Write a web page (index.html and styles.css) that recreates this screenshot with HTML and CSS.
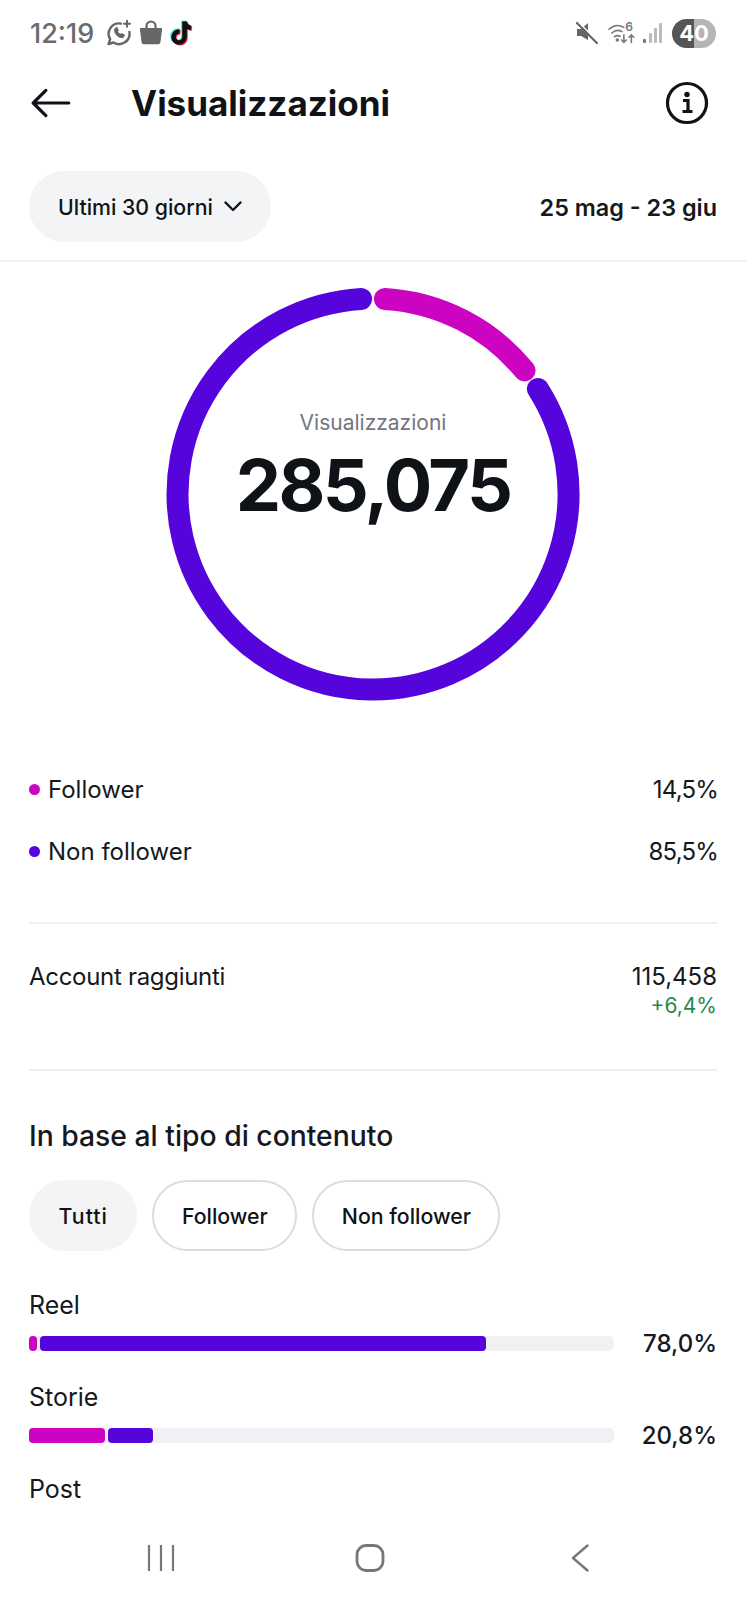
FILE: index.html
```html
<!DOCTYPE html>
<html lang="it">
<head>
    <meta charset="UTF-8">
    <meta name="viewport" content="width=device-width, initial-scale=1.0">
    <title>Visualizzazioni</title>
    <link rel="stylesheet" href="styles.css">
</head>
<body>

<div class="status-bar">
    <div class="status-left">
        <span class="clock">12:19</span>
        <svg class="ic-wa" width="28" height="28" viewBox="0 0 28 28" fill="none" stroke="#666" stroke-width="2.4" stroke-linecap="round" stroke-linejoin="round">
            <path d="M16 4.6A10.4 10.4 0 0 0 5.2 20.2L3.6 25l5-1.5A10.4 10.4 0 0 0 24.4 13"/>
            <path d="M9.6 10.4c0 4.4 3.6 8 8 8.2l1.8-2.4-3-1.6-1.2 1c-1.3-.7-2.4-1.8-3-3l1-1.2-1.4-3z" fill="#666" stroke-width="1.2"/>
            <path d="M22 1.8v6M19 4.8h6" stroke-width="2"/>
        </svg>
        <svg class="ic-bag" width="24" height="26" viewBox="0 0 24 26">
            <path d="M2 8h20c.8 0 1.2.5 1.1 1.3l-1.6 12.4c-.2 1.6-1.3 2.6-3 2.6H5.5c-1.7 0-2.8-1-3-2.6L.9 9.3C.8 8.5 1.2 8 2 8z" fill="#666"/>
            <path d="M7.5 8V6a4.500 4.500 0 0 1 9 0v2" fill="none" stroke="#666" stroke-width="2.2"/>
        </svg>
        <svg class="ic-tt" width="26" height="30" viewBox="0 0 26 28" fill="none" stroke-width="4.6">
            <path d="M9.5 12.5a5.500 5.500 0 1 0 5 5.500V2.500c.5 3.600 3 6 6.500 6.400" stroke="#25f4ee" transform="translate(-1 -.8)"/>
            <path d="M9.5 12.5a5.500 5.500 0 1 0 5 5.500V2.500c.5 3.600 3 6 6.500 6.400" stroke="#fe2c55" transform="translate(1 .8)"/>
            <path d="M9.5 12.5a5.500 5.500 0 1 0 5 5.500V2.500c.5 3.600 3 6 6.500 6.400" stroke="#111"/>
        </svg>
    </div>
    <div class="status-right">
        <svg width="24" height="24" viewBox="0 0 24 24">
            <path d="M2 8h4l7-6v17L6 15H2z" fill="#666"/>
            <path d="M2 2l20 20" stroke="#666" stroke-width="2.4" stroke-linecap="round"/>
            <path d="M4 1.500l20 20" stroke="#fff" stroke-width="1.2"/>
        </svg>
        <svg class="ic-wifi" width="28" height="26" viewBox="0 0 30 26" fill="none" stroke="#777" stroke-width="1.7" stroke-linecap="round">
            <path d="M1 9c5-4.500 11-5 16-2"/>
            <path d="M4 13c3.500-3 8-3.300 11-1.500"/>
            <path d="M7 17c2-1.500 4-1.500 6-.5"/>
            <circle cx="10" cy="20.500" r="1" fill="#777"/>
            <path d="M17 15v8m-2.500-2.500L17 23l2.500-2.500M25 23v-8m-2.500 2.500L25 15l2.500 2.500"/>
            <text class="wifi-six" x="18.500" y="11" fill="#777" stroke="none">6</text>
        </svg>
        <svg width="20" height="22" viewBox="0 0 20 22" fill="#bbb">
            <rect x="0" y="17" width="3" height="4" rx="1" fill="#777"/>
            <rect x="6" y="11" width="3" height="10" rx="1"/>
            <rect x="11" y="6" width="3" height="15" rx="1"/>
            <rect x="16" y="1" width="3" height="20" rx="1"/>
        </svg>
        <div class="battery"><span>40</span></div>
    </div>
</div>

<header class="top-bar">
    <svg class="back" width="40" height="30" viewBox="0 0 42 32" fill="none" stroke="#0f1216" stroke-width="3.4" stroke-linecap="round" stroke-linejoin="round">
        <path d="M40 16H3M15.500 2.500L2 16l13.500 13.500"/>
    </svg>
    <h1>Visualizzazioni</h1>
    <svg class="info" width="44" height="44" viewBox="0 0 44 44" fill="none">
        <circle cx="22" cy="22" r="19.500" stroke="#0f1216" stroke-width="3.2"/>
        <circle cx="22" cy="13.500" r="2.700" fill="#0f1216"/>
        <path d="M18 19.500h5v10.500M17.500 30.500h10" stroke="#0f1216" stroke-width="3.2"/>
    </svg>
</header>

<div class="filter-row">
    <div class="pill pill-on">Ultimi 30 giorni
        <svg width="18" height="11" viewBox="0 0 18 11" fill="none" stroke="#0f1216" stroke-width="2.4" stroke-linecap="round" stroke-linejoin="round"><path d="M1.500 1.500L9 9l7.500-7.500"/></svg>
    </div>
    <div class="dates">25 mag - 23 giu</div>
</div>

<section class="ring-wrap">
    <div class="ring">
        <svg width="414" height="414" viewBox="0 0 414 414" fill="none" stroke-width="22" stroke-linecap="round">
            <path d="M371.900 101.960A195.500 195.500 0 1 1 195.100 11.900" stroke="#5505dc"/>
            <path d="M218.900 11.900A195.500 195.500 0 0 1 358.500 83.400" stroke="#cc04c2"/>
        </svg>
        <div class="ring-text">
            <div class="ring-label">Visualizzazioni</div>
            <div class="ring-value">285,075</div>
        </div>
    </div>
</section>

<section class="legend">
    <div class="row"><span class="dot dot-pink"></span><span class="grow">Follower</span><span class="num">14,5%</span></div>
    <div class="row"><span class="dot dot-violet"></span><span class="grow">Non follower</span><span class="num">85,5%</span></div>
</section>

<section class="reach">
    <span class="reach-name">Account raggiunti</span>
    <div class="reach-nums">
        <div>115,458</div>
        <div class="up">+6,4%</div>
    </div>
</section>

<section class="by-type">
    <h2>In base al tipo di contenuto</h2>
    <div class="tabs">
        <div class="pill pill-on tab-all">Tutti</div>
        <div class="pill">Follower</div>
        <div class="pill">Non follower</div>
    </div>

    <div class="metric">
        <div class="metric-name">Reel</div>
        <div class="metric-line">
            <div class="track">
                <div class="seg seg-pink" style="width: 1.4%"></div>
                <div class="seg seg-violet" style="width: 76.2%"></div>
            </div>
            <div class="pct">78,0%</div>
        </div>
    </div>
    <div class="metric">
        <div class="metric-name">Storie</div>
        <div class="metric-line">
            <div class="track">
                <div class="seg seg-pink" style="width: 13%"></div>
                <div class="seg seg-violet" style="width: 7.7%"></div>
            </div>
            <div class="pct">20,8%</div>
        </div>
    </div>
    <div class="metric">
        <div class="metric-name">Post</div>
    </div>
</section>

<nav class="nav-bar">
    <svg width="28" height="28" viewBox="0 0 28 28" stroke="#777" stroke-width="2.2"><path d="M2 1v26M14 1v26M26 1v26"/></svg>
    <svg class="nav-home" width="30" height="28" viewBox="0 0 30 28" fill="none" stroke="#777" stroke-width="2.8"><rect x="2" y="1.500" width="26" height="25" rx="9"/></svg>
    <svg width="20" height="28" viewBox="0 0 20 28" fill="none" stroke="#777" stroke-width="2.4" stroke-linecap="round" stroke-linejoin="round"><path d="M17.500 1.500L3 14l14.500 12.500"/></svg>
</nav>

</body>
</html>
```

FILE: styles.css
```css
* {
    box-sizing: border-box;
}

html, body {
    margin: 0;
    padding: 0;
}

body {
    position: relative;
    width: 746px;
    height: 1600px;
    overflow: hidden;
    background-color: #fff;
    color: #15181d;
    font-family: Inter, "Liberation Sans", sans-serif;
    font-size: 24px;
}

h1, h2 {
    margin: 0;
}

svg {
    display: block;
    flex: none;
}

/* status bar */
.status-bar {
    height: 66px;
    padding: 0 30px;
    display: flex;
    align-items: center;
    justify-content: space-between;
}

.status-left, .status-right {
    display: flex;
    align-items: center;
}

.clock {
    font-size: 27px;
    font-weight: 500;
    color: #6b6b6b;
    margin-right: 11px;
}

.ic-bag {
    margin: 0 7px 0 6px;
}

.status-right svg {
    margin-right: 9px;
}

.status-right .ic-wifi {
    margin-right: 7px;
}

.wifi-six {
    font-size: 13px;
    font-family: Inter, sans-serif;
    font-weight: 600;
}

.battery {
    width: 44px;
    height: 29px;
    border-radius: 15px;
    background: linear-gradient(90deg, #555 0, #555 50%, #b5b5b5 50%, #b5b5b5 100%);
    color: #fff;
    font-size: 22px;
    font-weight: 700;
    text-align: center;
    line-height: 29px;
}

/* header */
.top-bar {
    height: 74px;
    padding: 0 30px;
    display: flex;
    align-items: center;
}

.back {
    margin-left: 1px;
}

.top-bar h1 {
    margin-left: 60px;
    font-size: 35px;
    font-weight: 650;
    color: #0f1216;
    flex: 1;
}

.info {
    margin-right: 7px;
}

/* filter */
.filter-row {
    margin-top: 32px;
    height: 90px;
    padding: 0 29px 19px;
    display: flex;
    align-items: center;
    justify-content: space-between;
    border-bottom: 2px solid #efefef;
}

.pill {
    height: 71px;
    padding: 0 27px;
    display: flex;
    align-items: center;
    gap: 11px;
    border: 2px solid #dcdcdc;
    border-radius: 36px;
    font-size: 21.3px;
    font-weight: 500;
    color: #0f1216;
}

.pill-on {
    background-color: #f3f4f6;
    border-color: #f3f4f6;
}

.tab-all {
    letter-spacing: 1px;
}

.dates {
    font-size: 23.4px;
    font-weight: 600;
    padding-top: 2px;
}

/* ring */
.ring-wrap {
    padding-top: 25px;
    display: flex;
    justify-content: center;
}

.ring {
    display: grid;
    width: 414px;
    height: 414px;
}

.ring > * {
    grid-area: 1 / 1;
}

.ring-text {
    padding-top: 122px;
    text-align: center;
}

.ring-label {
    font-size: 21px;
    line-height: 28px;
    color: #737680;
}

.ring-value {
    margin-top: 4px;
    font-size: 72px;
    letter-spacing: -2.6px;
    line-height: 88px;
    font-weight: 650;
    color: #0f1216;
}

/* legend */
.legend {
    margin: 0 29px;
    padding: 57px 0 40px;
    border-bottom: 2px solid #efefef;
}

.row {
    height: 62px;
    display: flex;
    align-items: center;
}

.dot {
    width: 11px;
    height: 11px;
    border-radius: 50%;
    margin-right: 8px;
}

.dot-pink {
    background-color: #cc04c2;
}

.dot-violet {
    background-color: #5505dc;
}

.grow {
    flex: 1;
}

.num {
    letter-spacing: -.8px;
    margin-right: -1px;
}

/* reach */
.reach {
    margin: 0 29px;
    padding: 38px 0 51px;
    display: flex;
    justify-content: space-between;
    border-bottom: 2px solid #efefef;
}

.reach-name {
    letter-spacing: -.3px;
}

.reach-nums {
    text-align: right;
}

.up {
    margin-top: 2px;
    font-size: 21px;
    color: #1f8a4d;
}

/* by type */
.by-type {
    padding: 47px 29px 0;
}

.by-type h2 {
    font-size: 28.3px;
    font-weight: 500;
    line-height: 36px;
}

.tabs {
    margin-top: 26px;
    display: flex;
    gap: 15px;
}

.tabs .pill {
    padding: 0 27.5px;
}

.metric {
    margin-top: 39px;
}

.metric + .metric {
    margin-top: 24px;
}

.metric-name {
    font-size: 25px;
    line-height: 30px;
}

.metric-line {
    margin-top: 9px;
    display: flex;
    align-items: center;
    justify-content: space-between;
}

.track {
    width: 585px;
    height: 15px;
    border-radius: 5px;
    background-color: #f0f1f5;
    display: flex;
    gap: 3px;
}

.seg {
    border-radius: 4px;
}

.seg-pink {
    background-color: #cc04c2;
}

.seg-violet {
    background-color: #5505dc;
}

.pct {
    font-weight: 500;
}

/* android nav */
.nav-bar {
    position: absolute;
    left: 0;
    right: 0;
    bottom: 0;
    height: 84px;
    padding: 0 156px 0 147px;
    display: flex;
    align-items: center;
    justify-content: space-between;
    background-color: #fff;
}

.nav-home {
    margin-left: -6px;
}
```
